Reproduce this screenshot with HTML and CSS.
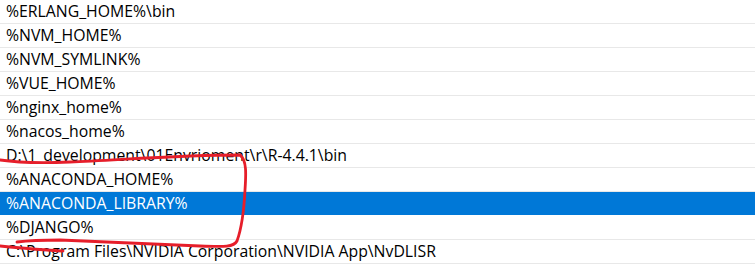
FILE: index.html
```html
<!DOCTYPE html>
<html>
<head>
<meta charset="utf-8">
<link rel="stylesheet" href="styles.css">
</head>
<body>
<div class="list">
  <div class="row">%ERLANG_HOME%\bin</div>
  <div class="row">%NVM_HOME%</div>
  <div class="row">%NVM_SYMLINK%</div>
  <div class="row">%VUE_HOME%</div>
  <div class="row">%nginx_home%</div>
  <div class="row">%nacos_home%</div>
  <div class="row">D:\1_development\01Envrioment\r\R-4.4.1\bin</div>
  <div class="row">%ANACONDA_HOME%</div>
  <div class="row selected">%ANACONDA_LIBRARY%</div>
  <div class="row">%DJANGO%</div>
  <div class="row">C:\Program Files\NVIDIA Corporation\NVIDIA App\NvDLISR</div>
</div>
<svg class="mark" width="755" height="274" viewBox="0 0 755 274">
  <path d="M0 160 C20 163 45 163 70 162 C120 160 180 155 240 155 C247 160 246 175 245 190 C244 210 241 230 237 241 C234 247 225 247 200 246 C150 244 100 242 60 240 C40 240 25 241 17 242" fill="none" stroke="#e61e2a" stroke-width="2.8" stroke-linecap="round" stroke-linejoin="round"/>
  <path d="M0 246 C20 248 40 250 63 251" fill="none" stroke="#e61e2a" stroke-width="2.8" stroke-linecap="round"/>
</svg>
</body>
</html>
```
FILE: styles.css
```css
html, body {
  margin: 0;
  padding: 0;
  background: #ffffff;
  overflow: hidden;
}
body {
  position: relative;
  width: 755px;
  height: 274px;
  font-family: "Open Sans", "Noto Sans", sans-serif;
  font-size: 15.8px;
  color: #000000;
}
.list {
  display: flex;
  flex-direction: column;
}
.row {
  height: 23px;
  line-height: 23px;
  padding-left: 6px;
  border-bottom: 1px solid #e8e8e8;
  white-space: nowrap;
}
.row.selected {
  background: #0078d7;
  color: #ffffff;
  border-bottom-color: #ffffff;
}
.mark {
  position: absolute;
  left: 0;
  top: 0;
  pointer-events: none;
}
```
